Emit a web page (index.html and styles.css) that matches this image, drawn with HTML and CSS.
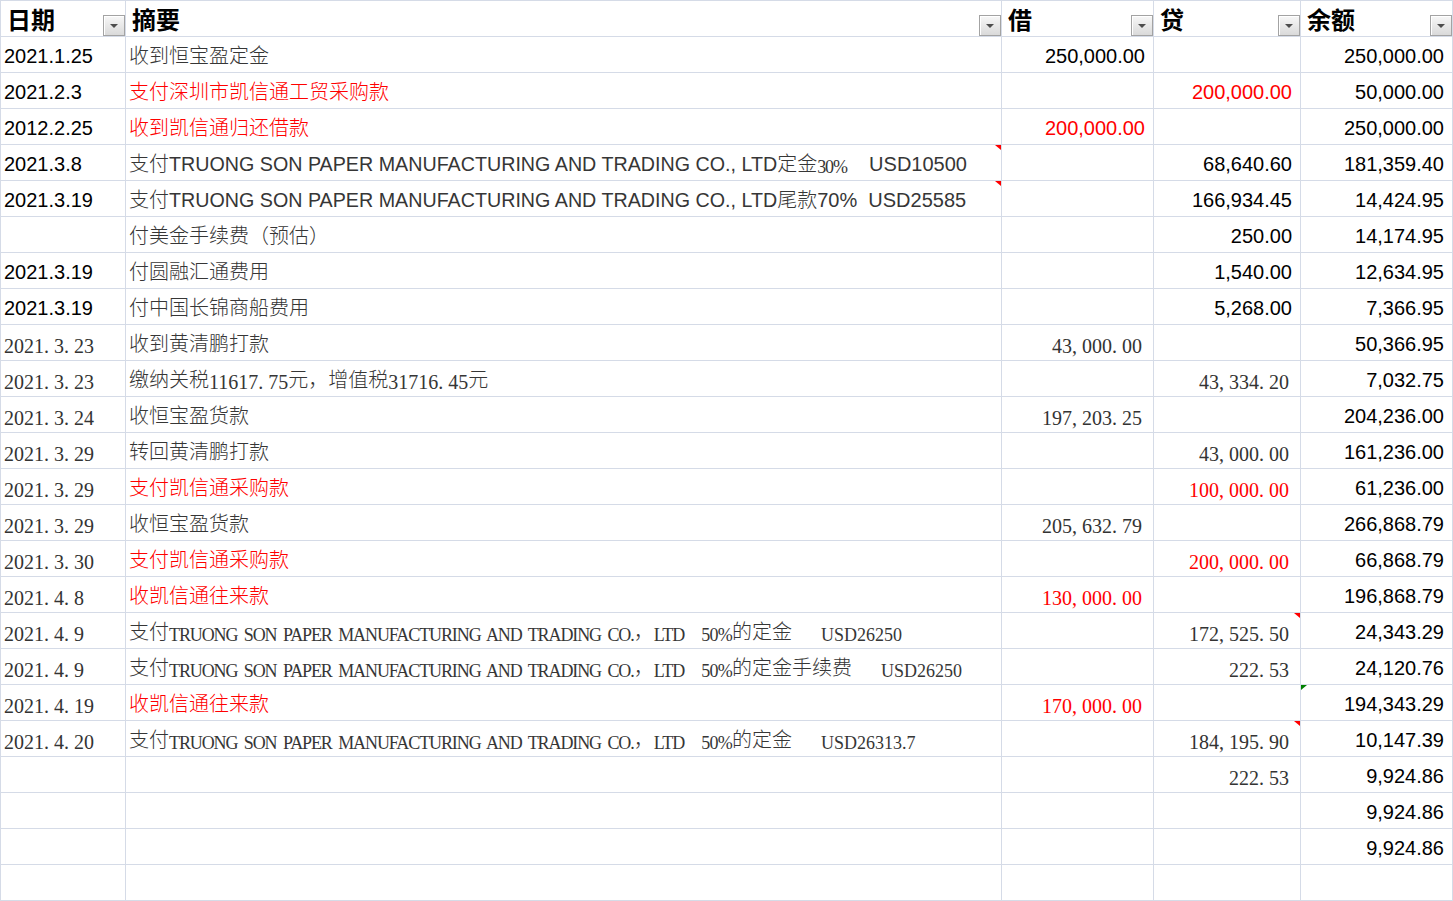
FILE: index.html
```html
<!DOCTYPE html>
<html lang="zh-CN">
<head>
<meta charset="utf-8">
<title>账目</title>
<link rel="stylesheet" href="styles.css">
</head>
<body>
<div class="sheet">
  <div class="row hd">
    <div class="c h">日期<span class="dd"></span></div>
    <div class="c h">摘要<span class="dd"></span></div>
    <div class="c h">借<span class="dd"></span></div>
    <div class="c h">贷<span class="dd"></span></div>
    <div class="c h">余额<span class="dd"></span></div>
  </div>
  <div class="row">
    <div class="c">2021.1.25</div>
    <div class="c t">收到恒宝盈定金</div>
    <div class="c n">250,000.00</div>
    <div class="c n"></div>
    <div class="c n">250,000.00</div>
  </div>
  <div class="row">
    <div class="c">2021.2.3</div>
    <div class="c t red">支付深圳市凯信通工贸采购款</div>
    <div class="c n"></div>
    <div class="c n red">200,000.00</div>
    <div class="c n">50,000.00</div>
  </div>
  <div class="row">
    <div class="c">2012.2.25</div>
    <div class="c t red">收到凯信通归还借款</div>
    <div class="c n red">200,000.00</div>
    <div class="c n"></div>
    <div class="c n">250,000.00</div>
  </div>
  <div class="row">
    <div class="c">2021.3.8</div>
    <div class="c t cm">支付<span class="lat">TRUONG SON PAPER MANUFACTURING AND TRADING CO., LTD</span>定金<span class="sl">30%</span>    USD10500</div>
    <div class="c n"></div>
    <div class="c n">68,640.60</div>
    <div class="c n">181,359.40</div>
  </div>
  <div class="row">
    <div class="c">2021.3.19</div>
    <div class="c t cm">支付<span class="lat">TRUONG SON PAPER MANUFACTURING AND TRADING CO., LTD</span>尾款70%  USD25585</div>
    <div class="c n"></div>
    <div class="c n">166,934.45</div>
    <div class="c n">14,424.95</div>
  </div>
  <div class="row">
    <div class="c"></div>
    <div class="c t">付美金手续费（预估）</div>
    <div class="c n"></div>
    <div class="c n">250.00</div>
    <div class="c n">14,174.95</div>
  </div>
  <div class="row">
    <div class="c">2021.3.19</div>
    <div class="c t">付圆融汇通费用</div>
    <div class="c n"></div>
    <div class="c n">1,540.00</div>
    <div class="c n">12,634.95</div>
  </div>
  <div class="row">
    <div class="c">2021.3.19</div>
    <div class="c t">付中国长锦商船费用</div>
    <div class="c n"></div>
    <div class="c n">5,268.00</div>
    <div class="c n">7,366.95</div>
  </div>
  <div class="row">
    <div class="c g"><span class="sd">2021<span class="p">.</span>3<span class="p">.</span>23</span></div>
    <div class="c t">收到黄清鹏打款</div>
    <div class="c nm g"><span class="sd">43<span class="p">,</span>000<span class="p">.</span>00</span></div>
    <div class="c n"></div>
    <div class="c n">50,366.95</div>
  </div>
  <div class="row">
    <div class="c g"><span class="sd">2021<span class="p">.</span>3<span class="p">.</span>23</span></div>
    <div class="c t">缴纳关税<span class="sd">11617<span class="p">.</span>75</span>元，增值税<span class="sd">31716<span class="p">.</span>45</span>元</div>
    <div class="c n"></div>
    <div class="c nm g"><span class="sd">43<span class="p">,</span>334<span class="p">.</span>20</span></div>
    <div class="c n">7,032.75</div>
  </div>
  <div class="row">
    <div class="c g"><span class="sd">2021<span class="p">.</span>3<span class="p">.</span>24</span></div>
    <div class="c t">收恒宝盈货款</div>
    <div class="c nm g"><span class="sd">197<span class="p">,</span>203<span class="p">.</span>25</span></div>
    <div class="c n"></div>
    <div class="c n">204,236.00</div>
  </div>
  <div class="row">
    <div class="c g"><span class="sd">2021<span class="p">.</span>3<span class="p">.</span>29</span></div>
    <div class="c t">转回黄清鹏打款</div>
    <div class="c n"></div>
    <div class="c nm g"><span class="sd">43<span class="p">,</span>000<span class="p">.</span>00</span></div>
    <div class="c n">161,236.00</div>
  </div>
  <div class="row">
    <div class="c g"><span class="sd">2021<span class="p">.</span>3<span class="p">.</span>29</span></div>
    <div class="c t red">支付凯信通采购款</div>
    <div class="c n"></div>
    <div class="c nm red"><span class="sd">100<span class="p">,</span>000<span class="p">.</span>00</span></div>
    <div class="c n">61,236.00</div>
  </div>
  <div class="row">
    <div class="c g"><span class="sd">2021<span class="p">.</span>3<span class="p">.</span>29</span></div>
    <div class="c t">收恒宝盈货款</div>
    <div class="c nm g"><span class="sd">205<span class="p">,</span>632<span class="p">.</span>79</span></div>
    <div class="c n"></div>
    <div class="c n">266,868.79</div>
  </div>
  <div class="row">
    <div class="c g"><span class="sd">2021<span class="p">.</span>3<span class="p">.</span>30</span></div>
    <div class="c t red">支付凯信通采购款</div>
    <div class="c n"></div>
    <div class="c nm red"><span class="sd">200<span class="p">,</span>000<span class="p">.</span>00</span></div>
    <div class="c n">66,868.79</div>
  </div>
  <div class="row">
    <div class="c g"><span class="sd">2021<span class="p">.</span>4<span class="p">.</span>8</span></div>
    <div class="c t red">收凯信通往来款</div>
    <div class="c nm red"><span class="sd">130<span class="p">,</span>000<span class="p">.</span>00</span></div>
    <div class="c n"></div>
    <div class="c n">196,868.79</div>
  </div>
  <div class="row">
    <div class="c g"><span class="sd">2021<span class="p">.</span>4<span class="p">.</span>9</span></div>
    <div class="c t">支付<span class="sl">TRUONG SON PAPER MANUFACTURING AND TRADING CO.</span>，<span class="sl sm">LTD  50%</span>的定金<span class="sl su">   USD26250</span></div>
    <div class="c n"></div>
    <div class="c nm g cm"><span class="sd">172<span class="p">,</span>525<span class="p">.</span>50</span></div>
    <div class="c n">24,343.29</div>
  </div>
  <div class="row">
    <div class="c g"><span class="sd">2021<span class="p">.</span>4<span class="p">.</span>9</span></div>
    <div class="c t">支付<span class="sl">TRUONG SON PAPER MANUFACTURING AND TRADING CO.</span>，<span class="sl sm">LTD  50%</span>的定金手续费<span class="sl su">   USD26250</span></div>
    <div class="c n"></div>
    <div class="c nm g"><span class="sd">222<span class="p">.</span>53</span></div>
    <div class="c n">24,120.76</div>
  </div>
  <div class="row">
    <div class="c g"><span class="sd">2021<span class="p">.</span>4<span class="p">.</span>19</span></div>
    <div class="c t red">收凯信通往来款</div>
    <div class="c nm red"><span class="sd">170<span class="p">,</span>000<span class="p">.</span>00</span></div>
    <div class="c n"></div>
    <div class="c n gr">194,343.29</div>
  </div>
  <div class="row">
    <div class="c g"><span class="sd">2021<span class="p">.</span>4<span class="p">.</span>20</span></div>
    <div class="c t">支付<span class="sl">TRUONG SON PAPER MANUFACTURING AND TRADING CO.</span>，<span class="sl sm">LTD  50%</span>的定金<span class="sl su">   USD26313.7</span></div>
    <div class="c n"></div>
    <div class="c nm g cm"><span class="sd">184<span class="p">,</span>195<span class="p">.</span>90</span></div>
    <div class="c n">10,147.39</div>
  </div>
  <div class="row">
    <div class="c"></div>
    <div class="c t"></div>
    <div class="c n"></div>
    <div class="c nm g"><span class="sd">222<span class="p">.</span>53</span></div>
    <div class="c n">9,924.86</div>
  </div>
  <div class="row">
    <div class="c"></div>
    <div class="c t"></div>
    <div class="c n"></div>
    <div class="c n"></div>
    <div class="c n">9,924.86</div>
  </div>
  <div class="row">
    <div class="c"></div>
    <div class="c t"></div>
    <div class="c n"></div>
    <div class="c n"></div>
    <div class="c n">9,924.86</div>
  </div>
  <div class="row">
    <div class="c"></div>
    <div class="c t"></div>
    <div class="c n"></div>
    <div class="c n"></div>
    <div class="c n"></div>
  </div>
</div>
</body>
</html>
```

FILE: styles.css
```css
* {
  box-sizing: border-box;
  margin: 0;
  padding: 0;
}

body {
  margin: 0;
  background: #ffffff;
  font-family: "Liberation Sans", "Noto Sans CJK SC", sans-serif;
  font-size: 20px;
  color: #000000;
}

.sheet {
  width: 1453px;
  border-left: 1px solid #d5dbe7;
  border-top: 1px solid #d5dbe7;
}

.row {
  display: grid;
  grid-template-columns: 125px 876px 152px 147px 152px;
  height: 36px;
}

.c {
  position: relative;
  display: flex;
  align-items: flex-end;
  padding: 0 4px 4px 3px;
  line-height: 23px;
  white-space: pre;
  overflow: hidden;
  border-right: 1px solid #d5dbe7;
  border-bottom: 1px solid #d5dbe7;
}

.t {
  color: #363636;
  font-weight: 300;
}

.n {
  justify-content: flex-end;
  padding-right: 8px;
}

.nm {
  justify-content: flex-end;
  padding-right: 11px;
}

.g {
  color: #333333;
}

.red {
  color: #ff0000;
}

.sd {
  font-family: "Liberation Serif", "Noto Sans CJK SC", serif;
  font-size: 20px;
  line-height: 20px;
  font-weight: 400;
  vertical-align: 2px;
}

.p {
  display: inline-block;
  width: 10px;
}

.sl {
  font-family: "Liberation Serif", "Noto Sans CJK SC", serif;
  font-size: 18px;
  line-height: 18px;
  letter-spacing: -1.1px;
  word-spacing: 3px;
  font-weight: 400;
  vertical-align: 2px;
}

.sm {
  letter-spacing: -0.8px;
  word-spacing: 4.7px;
}

.su {
  letter-spacing: 0;
  word-spacing: 5.2px;
}

.lat {
  font-size: 19.7px;
}

.h {
  font-family: "Noto Sans CJK SC", sans-serif;
  font-size: 24px;
  font-weight: 700;
  line-height: 28px;
  padding-left: 6px;
  padding-bottom: 3px;
  color: #000000;
}

.dd {
  position: absolute;
  right: 0;
  bottom: 0;
  width: 22px;
  height: 21px;
  border: 1px solid #a3a3a3;
  background: linear-gradient(#f7f7f7, #dadada);
  box-shadow: inset 1px 1px 0 #ffffff;
  display: flex;
  align-items: center;
  justify-content: center;
}

.dd::after {
  content: "";
  width: 0;
  height: 0;
  margin-top: 1px;
  border-left: 4px solid transparent;
  border-right: 4px solid transparent;
  border-top: 4px solid #4d4d4d;
}

.cm::after {
  content: "";
  position: absolute;
  top: 0;
  right: 0;
  border-left: 6px solid transparent;
  border-top: 5px solid #ff0000;
}

.gr::before {
  content: "";
  position: absolute;
  top: 0;
  left: 0;
  border-right: 6px solid transparent;
  border-top: 5px solid #008000;
}
```
